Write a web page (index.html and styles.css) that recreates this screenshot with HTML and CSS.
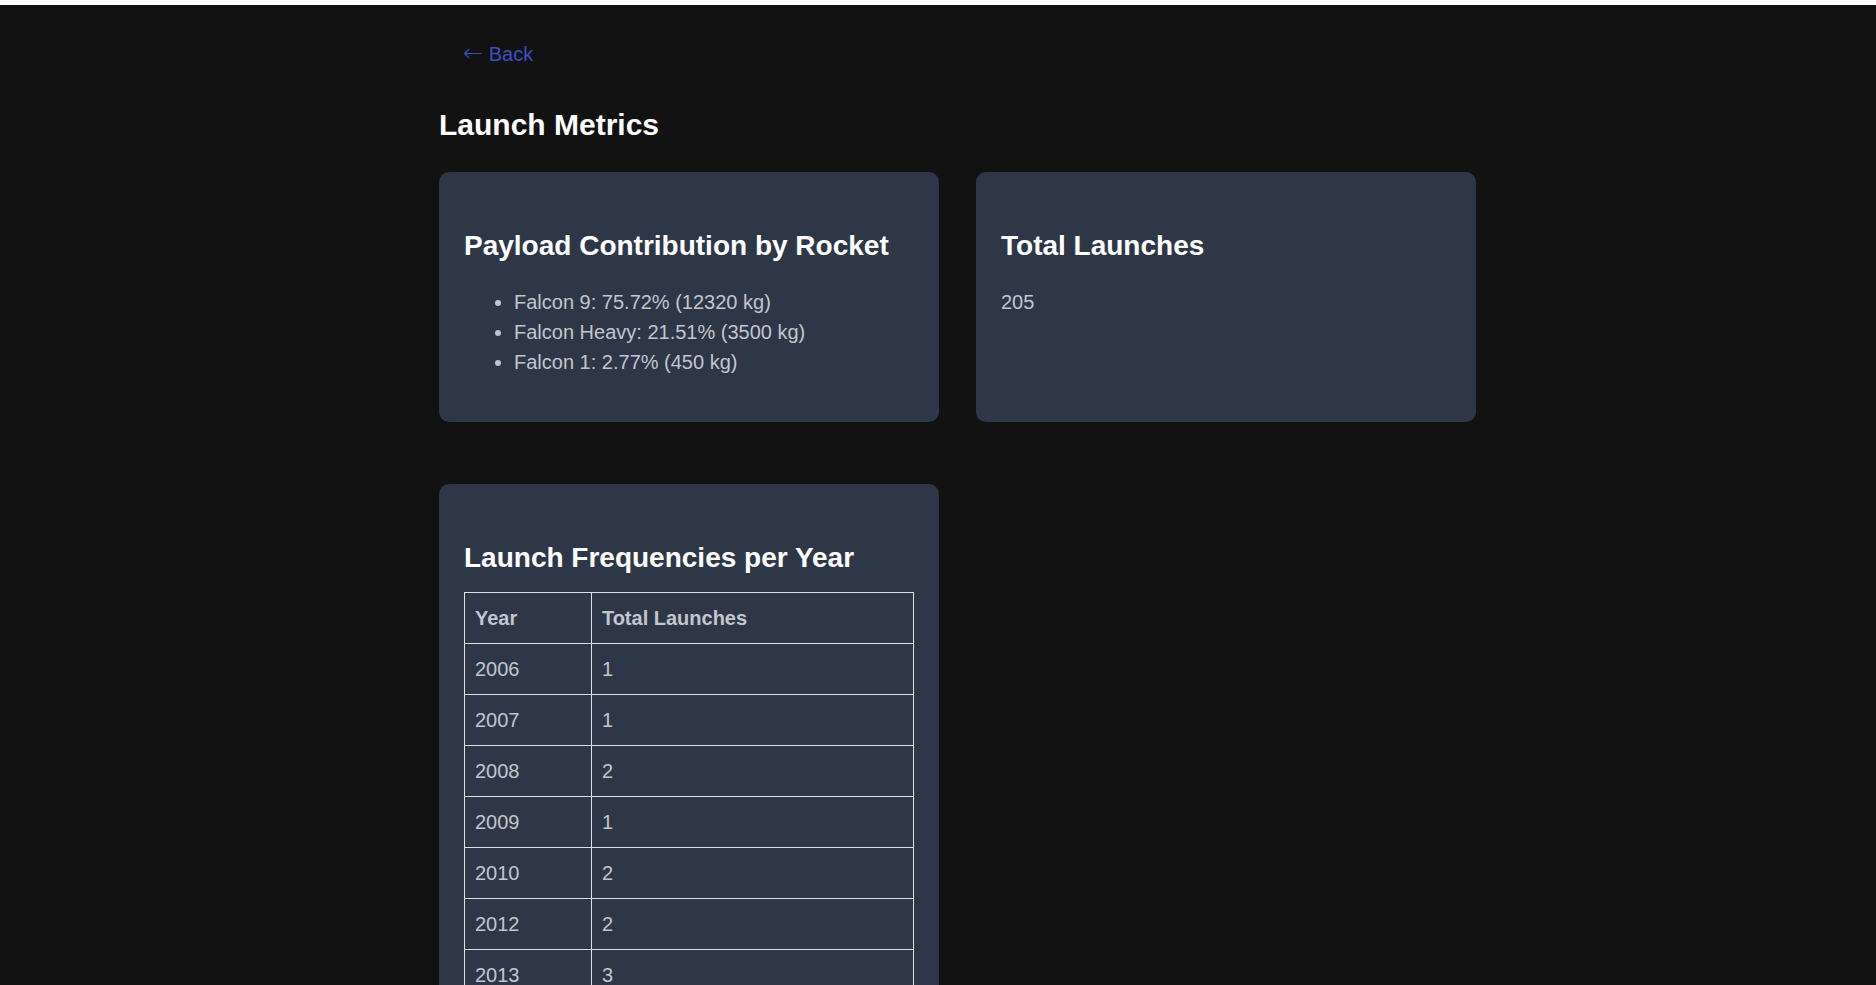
FILE: index.html
```html
<!DOCTYPE html>
<html lang="en">
<head>
<meta charset="utf-8">
<title>Launch Metrics</title>
<link rel="stylesheet" href="styles.css">
</head>
<body>
<div class="page">
  <div class="container">
    <a class="back" href="#"><span class="arrow">←</span> Back</a>
    <h1 class="title">Launch Metrics</h1>
    <div class="grid">
      <section class="card">
        <h2 class="card-title">Payload Contribution by Rocket</h2>
        <ul class="list">
          <li>Falcon 9: 75.72% (12320 kg)</li>
          <li>Falcon Heavy: 21.51% (3500 kg)</li>
          <li>Falcon 1: 2.77% (450 kg)</li>
        </ul>
      </section>
      <section class="card">
        <h2 class="card-title">Total Launches</h2>
        <p class="value">205</p>
      </section>
      <section class="card">
        <h2 class="card-title">Launch Frequencies per Year</h2>
        <table class="table">
          <thead>
            <tr><th>Year</th><th>Total Launches</th></tr>
          </thead>
          <tbody>
            <tr><td>2006</td><td>1</td></tr>
            <tr><td>2007</td><td>1</td></tr>
            <tr><td>2008</td><td>2</td></tr>
            <tr><td>2009</td><td>1</td></tr>
            <tr><td>2010</td><td>2</td></tr>
            <tr><td>2012</td><td>2</td></tr>
            <tr><td>2013</td><td>3</td></tr>
            <tr><td>2014</td><td>6</td></tr>
            <tr><td>2015</td><td>7</td></tr>
            <tr><td>2016</td><td>9</td></tr>
            <tr><td>2017</td><td>18</td></tr>
            <tr><td>2018</td><td>21</td></tr>
            <tr><td>2019</td><td>13</td></tr>
            <tr><td>2020</td><td>26</td></tr>
          </tbody>
        </table>
      </section>
    </div>
  </div>
</div>
</body>
</html>
```
FILE: styles.css
```css
html {
  background: #ffffff;
}

body {
  margin: 0;
  font-family: "Liberation Sans", Arial, sans-serif;
  font-size: 20px;
  color: #c2c6cd;
}

.page {
  margin-top: 5px;
  background: #121212;
  min-height: 980px;
  padding-bottom: 60px;
}

.container {
  width: 998px;
  margin: 0 auto;
  padding-top: 37px;
}

.back {
  display: inline-block;
  height: 23px;
  vertical-align: top;
  margin-left: 24px;
  font-size: 20px;
  line-height: 23px;
  color: #3c4fc2;
  text-decoration: none;
}

.arrow {
  font-family: "DejaVu Sans", sans-serif;
  font-size: 24px;
  font-weight: 200;
}

.title {
  margin: 42px 0 30px;
  font-size: 30px;
  line-height: 35px;
  font-weight: bold;
  color: #ffffff;
}

.grid {
  display: grid;
  grid-template-columns: 500px 500px;
  column-gap: 37px;
  row-gap: 62px;
}

.card {
  background: #2d3748;
  border-radius: 10px;
  padding: 25px;
}

.card-title {
  margin: 33px 0 18px;
  font-size: 28px;
  line-height: 32px;
  font-weight: bold;
  color: #ffffff;
}

.list {
  margin: 25px 0 20px;
  padding-left: 50px;
  line-height: 30px;
}

.value {
  margin: 25px 0 20px;
  line-height: 30px;
}

.table {
  width: 100%;
  border-collapse: collapse;
  line-height: 30px;
}

.table th,
.table td {
  border: 1px solid #dcdfe4;
  padding: 10px;
  text-align: left;
}

.table th {
  font-weight: bold;
}
```
